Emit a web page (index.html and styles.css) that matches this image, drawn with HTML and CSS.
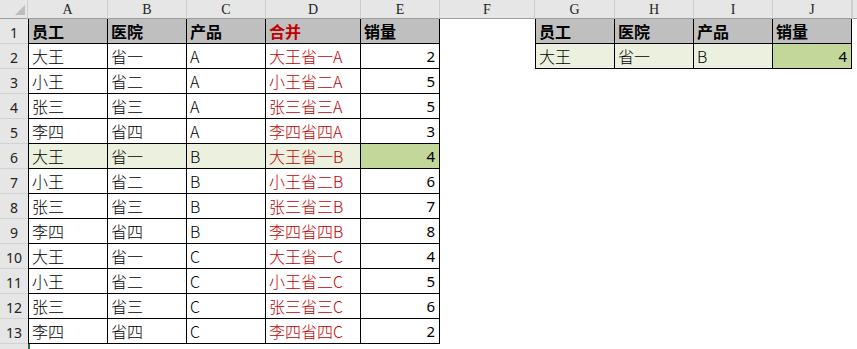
FILE: index.html
```html
<!DOCTYPE html>
<html>
<head>
<meta charset="utf-8">
<link rel="stylesheet" href="styles.css">
</head>
<body>
<div class="sheet">
  <div class="corner"><span class="tri"></span></div>
  <div class="ch">A</div><div class="ch">B</div><div class="ch">C</div><div class="ch">D</div><div class="ch">E</div><div class="ch">F</div><div class="ch">G</div><div class="ch">H</div><div class="ch">I</div><div class="ch">J</div><div class="ch rest"></div>

  <div class="rh">1</div>
  <div class="c t first hd">员工</div><div class="c t hd">医院</div><div class="c t hd">产品</div><div class="c t hd red">合并</div><div class="c t hd">销量</div>
  <div class="c"></div>
  <div class="c t first hd">员工</div><div class="c t hd">医院</div><div class="c t hd">产品</div><div class="c t hd">销量</div><div class="c"></div>

  <div class="rh">2</div>
  <div class="c t first">大王</div><div class="c t">省一</div><div class="c t">A</div><div class="c t red">大王省一A</div><div class="c t num">2</div>
  <div class="c"></div>
  <div class="c t first hl">大王</div><div class="c t hl">省一</div><div class="c t hl">B</div><div class="c t num hg">4</div><div class="c"></div>

  <div class="rh">3</div>
  <div class="c t first">小王</div><div class="c t">省二</div><div class="c t">A</div><div class="c t red">小王省二A</div><div class="c t num">5</div>
  <div class="c"></div><div class="c"></div><div class="c"></div><div class="c"></div><div class="c"></div><div class="c"></div>

  <div class="rh">4</div>
  <div class="c t first">张三</div><div class="c t">省三</div><div class="c t">A</div><div class="c t red">张三省三A</div><div class="c t num">5</div>
  <div class="c"></div><div class="c"></div><div class="c"></div><div class="c"></div><div class="c"></div><div class="c"></div>

  <div class="rh">5</div>
  <div class="c t first">李四</div><div class="c t">省四</div><div class="c t">A</div><div class="c t red">李四省四A</div><div class="c t num">3</div>
  <div class="c"></div><div class="c"></div><div class="c"></div><div class="c"></div><div class="c"></div><div class="c"></div>

  <div class="rh">6</div>
  <div class="c t first hl">大王</div><div class="c t hl">省一</div><div class="c t hl">B</div><div class="c t hl red">大王省一B</div><div class="c t num hg">4</div>
  <div class="c"></div><div class="c"></div><div class="c"></div><div class="c"></div><div class="c"></div><div class="c"></div>

  <div class="rh">7</div>
  <div class="c t first">小王</div><div class="c t">省二</div><div class="c t">B</div><div class="c t red">小王省二B</div><div class="c t num">6</div>
  <div class="c"></div><div class="c"></div><div class="c"></div><div class="c"></div><div class="c"></div><div class="c"></div>

  <div class="rh">8</div>
  <div class="c t first">张三</div><div class="c t">省三</div><div class="c t">B</div><div class="c t red">张三省三B</div><div class="c t num">7</div>
  <div class="c"></div><div class="c"></div><div class="c"></div><div class="c"></div><div class="c"></div><div class="c"></div>

  <div class="rh">9</div>
  <div class="c t first">李四</div><div class="c t">省四</div><div class="c t">B</div><div class="c t red">李四省四B</div><div class="c t num">8</div>
  <div class="c"></div><div class="c"></div><div class="c"></div><div class="c"></div><div class="c"></div><div class="c"></div>

  <div class="rh">10</div>
  <div class="c t first">大王</div><div class="c t">省一</div><div class="c t">C</div><div class="c t red">大王省一C</div><div class="c t num">4</div>
  <div class="c"></div><div class="c"></div><div class="c"></div><div class="c"></div><div class="c"></div><div class="c"></div>

  <div class="rh">11</div>
  <div class="c t first">小王</div><div class="c t">省二</div><div class="c t">C</div><div class="c t red">小王省二C</div><div class="c t num">5</div>
  <div class="c"></div><div class="c"></div><div class="c"></div><div class="c"></div><div class="c"></div><div class="c"></div>

  <div class="rh">12</div>
  <div class="c t first">张三</div><div class="c t">省三</div><div class="c t">C</div><div class="c t red">张三省三C</div><div class="c t num">6</div>
  <div class="c"></div><div class="c"></div><div class="c"></div><div class="c"></div><div class="c"></div><div class="c"></div>

  <div class="rh">13</div>
  <div class="c t first">李四</div><div class="c t">省四</div><div class="c t">C</div><div class="c t red">李四省四C</div><div class="c t num">2</div>
  <div class="c"></div><div class="c"></div><div class="c"></div><div class="c"></div><div class="c"></div><div class="c"></div>

  <div class="rh last"></div>
  <div class="c sel"></div>
</div>
</body>
</html>
```

FILE: styles.css
```css
html, body {
  margin: 0;
  padding: 0;
  background: #ffffff;
}
body {
  width: 857px;
  height: 349px;
  overflow: hidden;
}
.sheet {
  display: grid;
  grid-template-columns: 28px 80px 79px 79px 95px 79px 95px 80px 79px 79px 79px 1fr;
  grid-template-rows: 19px repeat(13, 25px) 6px;
  width: 857px;
  height: 349px;
  font-family: "Noto Sans CJK SC", "Noto Sans", sans-serif;
  font-size: 16px;
  color: #000;
}
.corner {
  position: relative;
  background: #e6e6e6;
  border-right: 1px solid #cfcfcf;
  border-bottom: 1px solid #9e9e9e;
  box-sizing: border-box;
}
.tri {
  position: absolute;
  right: 2px;
  bottom: 3px;
  width: 0;
  height: 0;
  border-left: 10px solid transparent;
  border-bottom: 10px solid #bdbdbd;
}
.ch {
  background: #e6e6e6;
  border-right: 1px solid #cdcdcd;
  border-bottom: 1px solid #9e9e9e;
  box-sizing: border-box;
  font-family: "Liberation Serif", "DejaVu Serif", serif;
  font-size: 14px;
  line-height: 19px;
  text-align: center;
  color: #222;
}
.ch.rest {
  border-right: none;
  border-left: 1px solid #cdcdcd;
}
.rh {
  background: #e6e6e6;
  border-bottom: 1px solid #d2d2d2;
  box-sizing: border-box;
  font-family: "Noto Sans", sans-serif;
  font-size: 14px;
  line-height: 18px;
  padding-top: 5px;
  text-align: center;
  color: #222;
}
.rh.last {
  border-bottom: none;
}
.c {
  box-sizing: border-box;
  line-height: 24px;
  padding: 0 3px;
  white-space: nowrap;
  overflow: hidden;
  font-weight: 300;
}
.t {
  border-right: 1px solid #000;
  border-bottom: 1px solid #000;
}
.first {
  border-left: 1px solid #000;
}
.hd {
  background: #bfbfbf;
  font-weight: 700;
}
.red {
  color: #c00000;
}
.num {
  text-align: right;
  padding-right: 4px;
  font-family: "Noto Sans", sans-serif;
  font-size: 15px;
  font-weight: 400;
}
.hl {
  background: #ebf1de;
}
.hg {
  background: #c4d79b;
}
.sel {
  border-left: 2px solid #217346;
}
```
